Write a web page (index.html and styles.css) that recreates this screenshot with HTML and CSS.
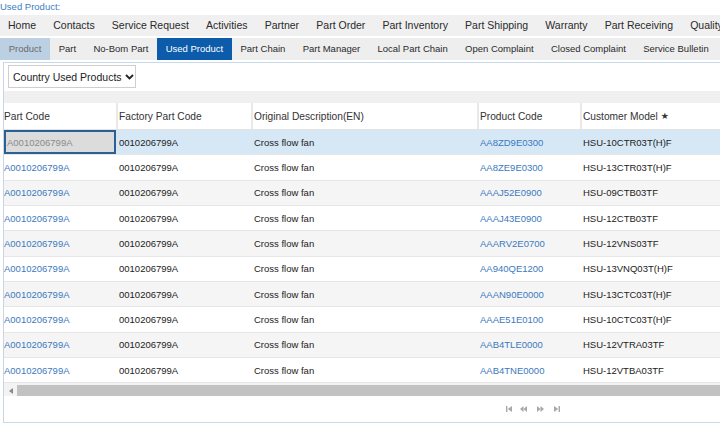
FILE: index.html
```html
<!DOCTYPE html>
<html>
<head>
<meta charset="utf-8">
<link rel="stylesheet" href="styles.css">
</head>
<body>
<div class="title">Used Product:</div>
<nav class="nav1">
  <a>Home</a><a>Contacts</a><a>Service Request</a><a>Activities</a><a>Partner</a><a>Part Order</a><a>Part Inventory</a><a>Part Shipping</a><a>Warranty</a><a>Part Receiving</a><a>Quality</a>
</nav>
<nav class="nav2">
  <a class="hl">Product</a><a>Part</a><a>No-Bom Part</a><a class="active">Used Product</a><a>Part Chain</a><a>Part Manager</a><a>Local Part Chain</a><a>Open Complaint</a><a>Closed Complaint</a><a>Service Bulletin</a>
</nav>
<section class="panel">
  <div class="toolbar">
    <div class="select">Country Used Products
      <svg class="chev" width="9" height="6" viewBox="0 0 9 6"><path d="M1 1 L4.5 4.5 L8 1" fill="none" stroke="#222" stroke-width="1.8"/></svg>
    </div>
  </div>
  <div class="band"></div>
  <div class="grid">
    <div class="row head">
      <div class="c">Part Code</div><div class="c">Factory Part Code</div><div class="c">Original Description(EN)</div><div class="c">Product Code</div><div class="c">Customer Model <span class="star">★</span></div>
    </div>
    <div class="row sel">
      <div class="c"><span class="selbox">A0010206799A</span></div><div class="c">0010206799A</div><div class="c">Cross flow fan</div><div class="c link">AA8ZD9E0300</div><div class="c">HSU-10CTR03T(H)F</div>
    </div>
    <div class="row">
      <div class="c link">A0010206799A</div><div class="c">0010206799A</div><div class="c">Cross flow fan</div><div class="c link">AA8ZE9E0300</div><div class="c">HSU-13CTR03T(H)F</div>
    </div>
    <div class="row alt">
      <div class="c link">A0010206799A</div><div class="c">0010206799A</div><div class="c">Cross flow fan</div><div class="c link">AAAJ52E0900</div><div class="c">HSU-09CTB03TF</div>
    </div>
    <div class="row">
      <div class="c link">A0010206799A</div><div class="c">0010206799A</div><div class="c">Cross flow fan</div><div class="c link">AAAJ43E0900</div><div class="c">HSU-12CTB03TF</div>
    </div>
    <div class="row alt">
      <div class="c link">A0010206799A</div><div class="c">0010206799A</div><div class="c">Cross flow fan</div><div class="c link">AAARV2E0700</div><div class="c">HSU-12VNS03TF</div>
    </div>
    <div class="row">
      <div class="c link">A0010206799A</div><div class="c">0010206799A</div><div class="c">Cross flow fan</div><div class="c link">AA940QE1200</div><div class="c">HSU-13VNQ03T(H)F</div>
    </div>
    <div class="row alt">
      <div class="c link">A0010206799A</div><div class="c">0010206799A</div><div class="c">Cross flow fan</div><div class="c link">AAAN90E0000</div><div class="c">HSU-13CTC03T(H)F</div>
    </div>
    <div class="row">
      <div class="c link">A0010206799A</div><div class="c">0010206799A</div><div class="c">Cross flow fan</div><div class="c link">AAAE51E0100</div><div class="c">HSU-10CTC03T(H)F</div>
    </div>
    <div class="row alt">
      <div class="c link">A0010206799A</div><div class="c">0010206799A</div><div class="c">Cross flow fan</div><div class="c link">AAB4TLE0000</div><div class="c">HSU-12VTRA03TF</div>
    </div>
    <div class="row">
      <div class="c link">A0010206799A</div><div class="c">0010206799A</div><div class="c">Cross flow fan</div><div class="c link">AAB4TNE0000</div><div class="c">HSU-12VTBA03TF</div>
    </div>
  </div>
  <div class="hscroll">
    <div class="sarrow"><svg width="4" height="6" viewBox="0 0 4 6"><path d="M4 0 L0 3 L4 6 Z" fill="#8a8a8a"/></svg></div>
    <div class="thumb"></div>
  </div>
  <div class="pager">
    <svg width="6" height="6" viewBox="0 0 6 6"><rect x="0" y="0" width="1.4" height="6" fill="#a8a8a8"/><path d="M6 0 L1.8 3 L6 6 Z" fill="#a8a8a8"/></svg>
    <svg width="7" height="6" viewBox="0 0 7 6"><path d="M3.5 0 L0 3 L3.5 6 Z M7 0 L3.5 3 L7 6 Z" fill="#a8a8a8"/></svg>
    <svg width="7" height="6" viewBox="0 0 7 6"><path d="M0 0 L3.5 3 L0 6 Z M3.5 0 L7 3 L3.5 6 Z" fill="#a8a8a8"/></svg>
    <svg width="6" height="6" viewBox="0 0 6 6"><path d="M0 0 L4.2 3 L0 6 Z" fill="#a8a8a8"/><rect x="4.6" y="0" width="1.4" height="6" fill="#a8a8a8"/></svg>
  </div>
</section>
</body>
</html>
```

FILE: styles.css
```css
html, body {
  margin: 0;
  padding: 0;
  overflow: hidden;
  background: #fff;
}
body {
  font-family: "Liberation Sans", Arial, sans-serif;
  color: #222;
  width: 720px;
  height: 445px;
}
.title {
  font-size: 9.5px;
  color: #3c7dc4;
  height: 15px;
  line-height: 13px;
  white-space: nowrap;
}
.nav1, .nav2 {
  display: flex;
  white-space: nowrap;
  width: 760px;
}
.nav1 {
  background: #f0f0f0;
  height: 21px;
  line-height: 21px;
  font-size: 10.5px;
  color: #2a2a2a;
}
.nav1 a {
  padding: 0 8.6px;
}
.nav1 a:first-child {
  padding-left: 8px;
}
.nav2 {
  margin-top: 2px;
  background: #eeeeee;
  height: 22px;
  line-height: 22px;
  font-size: 9.5px;
  color: #2a2a2a;
}
.nav2 a {
  padding: 0 8.65px;
}
.nav2 a.hl {
  background: #bcd0e3;
  color: #6b6b6b;
  padding-left: 8.7px;
}
.nav2 a.active {
  background: #0c5cab;
  color: #fff;
}
.panel {
  margin: 2px 0 0 3px;
  width: 760px;
  border-top: 1px solid #c7d9e9;
  border-left: 1px solid #c9d6e2;
  border-bottom: 1px solid #c7d9e9;
}
.toolbar {
  padding: 2px 0 3px 4px;
  height: 23px;
}
.select {
  display: inline-flex;
  align-items: center;
  box-sizing: border-box;
  width: 128px;
  height: 23px;
  border: 1px solid #cfcfcf;
  padding-left: 4px;
  font-size: 10.5px;
  color: #222;
  white-space: nowrap;
}
.chev {
  margin-left: 3px;
}
.band {
  height: 12px;
  background: #f0f0f0;
}
.row {
  display: grid;
  grid-template-columns: 112px 135px 226px 103px 184px;
  height: 25.35px;
  box-sizing: border-box;
  border-bottom: 1px solid #e6e6e6;
  align-items: center;
  font-size: 9.5px;
  white-space: nowrap;
}
.row .c {
  padding-left: 3px;
  height: 100%;
  display: flex;
  align-items: center;
  box-sizing: border-box;
}
.row .c:first-child {
  padding-left: 0;
}
.row.head {
  height: 27px;
  font-size: 10.2px;
  color: #333;
  background: #fff;
  border-bottom: 1px solid #e2e2e2;
}
.row.head .c + .c {
  border-left: 2px solid #e9e9e9;
  padding-left: 1px;
}
.row.alt {
  background: #f5f5f5;
}
.row.sel {
  background: #d6e8f6;
}
.selbox {
  display: flex;
  align-items: center;
  box-sizing: border-box;
  width: 114px;
  height: 24px;
  background: #dcdcdc;
  border: 2px solid #2c5f92;
  padding-left: 1px;
  color: #8a8a8a;
}
.link {
  color: #3b79bd;
}
.star {
  font-family: "DejaVu Sans", sans-serif;
  font-size: 9px;
  margin-left: 3px;
}
.hscroll {
  display: flex;
  height: 11px;
  padding-top: 2px;
  background: #f3f3f3;
}
.sarrow {
  width: 13px;
  display: flex;
  align-items: center;
  justify-content: center;
}
.thumb {
  flex: 1;
  background: #c2c2c2;
}
.pager {
  height: 26px;
  display: flex;
  align-items: center;
  padding-left: 502px;
}
.pager svg:nth-child(2) {
  margin-left: 8px;
}
.pager svg:nth-child(3) {
  margin-left: 10px;
}
.pager svg:nth-child(4) {
  margin-left: 10px;
}
```
